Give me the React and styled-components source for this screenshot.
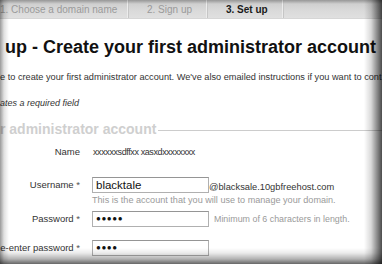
import React from "react";
import styled, { createGlobalStyle } from "styled-components";

const GlobalStyle = createGlobalStyle`
  html, body { margin: 0; padding: 0; background: #fff; }
  body { font-family: "Liberation Sans", Arial, sans-serif; }
`;

const Frame = styled.div`
  position: relative;
  width: 382px;
  height: 264px;
  overflow: hidden;
  background: #fff;
  color: #333;
`;

const Vignette = styled.div`
  position: absolute;
  inset: 0;
  pointer-events: none;
  background:
    linear-gradient(to left, rgba(0,0,0,0.7), rgba(0,0,0,0.45) 5px, rgba(0,0,0,0.15) 11px, transparent 18px),
    linear-gradient(to top, rgba(0,0,0,0.6), rgba(0,0,0,0.3) 5px, rgba(0,0,0,0.08) 11px, transparent 16px),
    linear-gradient(to right, rgba(0,0,0,0.4), rgba(0,0,0,0.12) 4px, transparent 9px),
    linear-gradient(to bottom, rgba(0,0,0,0.25), transparent 4px);
`;

const TabBar = styled.div`
  display: flex;
  height: 18px;
  background: linear-gradient(#c9c9c9, #dadada 60%, #e0e0e0);
  border-bottom: 1px solid #d6d6d6;
`;

const Tab = styled.div`
  display: flex;
  align-items: center;
  flex: none;
  width: ${(p) => p.$w}px;
  padding-left: ${(p) => p.$pl}px;
  box-sizing: border-box;
  border-right: 1px solid #ececec;
  box-shadow: 1px 0 0 #c6c6c6;
  font-size: 10px;
  white-space: nowrap;
  overflow: hidden;
  color: ${(p) => (p.$active ? "#1a1a1a" : "#9a9a9a")};
  font-weight: ${(p) => (p.$active ? "bold" : "normal")};
`;

const Heading = styled.h1`
  margin: 17px 0 0 5px;
  font-size: 18px;
  line-height: 22px;
  font-weight: bold;
  color: #111;
  white-space: nowrap;
`;

const Intro = styled.p`
  margin: 13px 0 0 0;
  font-size: 9.2px;
  line-height: 12px;
  white-space: nowrap;
  color: #333;
`;

const Required = styled.p`
  margin: 14px 0 0 0;
  font-size: 9px;
  line-height: 12px;
  font-style: italic;
  color: #333;
`;

const Legend = styled.div`
  display: flex;
  align-items: center;
  gap: 2px;
  margin-top: 12px;
  font-size: 14px;
  line-height: 16px;
  font-weight: bold;
  color: #cfcfcf;
  white-space: nowrap;
  &::after {
    content: "";
    flex: 1;
    height: 1px;
    background: #cccccc;
    margin-top: 2px;
  }
`;

const Form = styled.div`
  display: grid;
  grid-template-columns: 80px 1fr;
  column-gap: 12px;
  margin-top: 9px;
  align-items: center;
`;

const Label = styled.div`
  text-align: right;
  font-size: 9.5px;
  line-height: 12px;
  color: #333;
  white-space: nowrap;
  margin-top: ${(p) => p.$mt || 0}px;
`;

const Star = styled.span`
  color: #555;
`;

const Field = styled.div`
  display: flex;
  align-items: center;
  gap: ${(p) => p.$gap || 0}px;
  margin-top: ${(p) => p.$mt || 0}px;
  white-space: nowrap;
  line-height: 12px;
`;

const NameValue = styled.span`
  font-size: 9px;
  letter-spacing: -0.4px;
  color: #333;
  padding-left: 1px;
`;

const Input = styled.div`
  width: 117px;
  height: 16px;
  box-sizing: border-box;
  border: 1px solid #b0b0b0;
  border-top-color: #959595;
  background: #fff;
  padding: 0 3px;
  display: flex;
  align-items: center;
  font-size: 11.5px;
  color: #111;
  flex: none;
`;

const Dots = styled.span`
  font-size: 8px;
  letter-spacing: 0.6px;
  color: #111;
`;

const Suffix = styled.span`
  font-size: 9.3px;
  color: #333;
  padding-top: 4px;
`;

const Hint = styled.div`
  grid-column: 2;
  font-size: 9.1px;
  line-height: 11px;
  color: #9a9a9a;
  white-space: nowrap;
  margin-top: 2px;
`;

const Note = styled.span`
  font-size: 8.9px;
  color: #9a9a9a;
`;

export default function App() {
  return (
    <>
      <GlobalStyle />
      <Frame>
        <TabBar>
          <Tab $w={128} $pl={0}>1. Choose a domain name</Tab>
          <Tab $w={79} $pl={19}>2. Sign up</Tab>
          <Tab $w={76} $pl={19} $active>3. Set up</Tab>
        </TabBar>
        <Heading>up - Create your first administrator account</Heading>
        <Intro>
          e to create your first administrator account. We've also emailed
          instructions if you want to cont
        </Intro>
        <Required>ates a required field</Required>
        <Legend>r administrator account</Legend>
        <Form>
          <Label>Name</Label>
          <Field>
            <NameValue>xxxxxxsdffxx xasxdxxxxxxxx</NameValue>
          </Field>
          <Label $mt={19}>
            Username <Star>*</Star>
          </Label>
          <Field $mt={19}>
            <Input>blacktale</Input>
            <Suffix>@blacksale.10gbfreehost.com</Suffix>
          </Field>
          <Hint>This is the account that you will use to manage your domain.</Hint>
          <Label $mt={5}>
            Password <Star>*</Star>
          </Label>
          <Field $mt={5} $gap={5}>
            <Input>
              <Dots>●●●●●</Dots>
            </Input>
            <Note>Minimum of 6 characters in length.</Note>
          </Field>
          <Label $mt={13}>
            e-enter password <Star>*</Star>
          </Label>
          <Field $mt={13}>
            <Input>
              <Dots>●●●●</Dots>
            </Input>
          </Field>
        </Form>
        <Vignette />
      </Frame>
    </>
  );
}
